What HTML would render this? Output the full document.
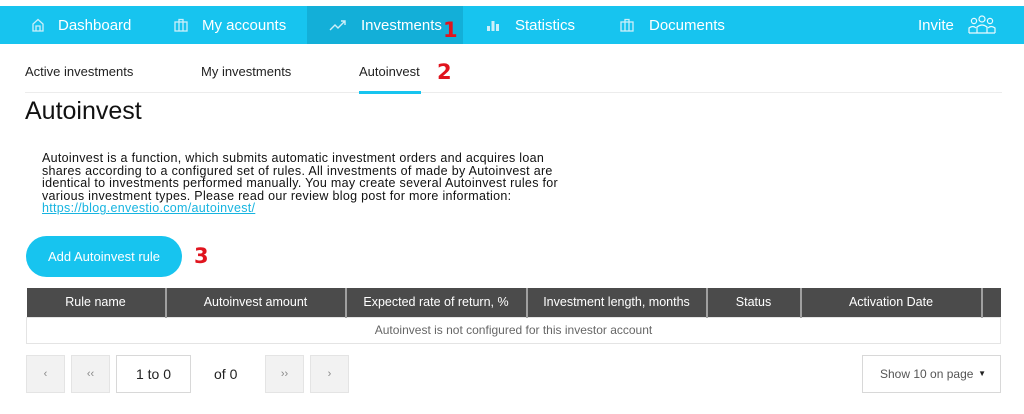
<!DOCTYPE html>
<html><head><style>
*{margin:0;padding:0;box-sizing:border-box}
body{width:1024px;height:414px;background:#fff;font-family:"Liberation Sans",sans-serif;position:relative;overflow:hidden;color:#222}
.a{position:absolute;white-space:nowrap}
.nav{position:absolute;left:0;top:6px;width:1024px;height:38px;background:#17c4ef}
.nav .a{color:#fff;font-size:15px;top:11px}
.red{color:#e0141e;font-weight:bold;font-size:21px;font-family:"DejaVu Sans",sans-serif}
th{background:#4b4b4b;color:#fff;font-weight:normal;font-size:12.5px;height:29px;border-right:2px solid #a0a0a0}
td{font-size:12px;color:#666;text-align:center;height:26px;border:1px solid #e4e4e4}
.pb{position:absolute;top:355px;height:38px;background:#f2f2f2;border:1px solid #e4e4e4;color:#888;font-size:11px;text-align:center;line-height:36px}
</style></head><body>
<div class="nav">
<div style="position:absolute;left:307px;top:0;width:156px;height:38px;background:#13afd8"></div>
<svg class="a" style="left:31px;top:12px" width="14" height="14" viewBox="0 0 14 14" fill="none" stroke="#cdeff9" stroke-width="1.3"><path d="M2 13V6L7 1.5 12 6v7zM5 13V8h4v5"/></svg>
<div class="a" style="left:58px">Dashboard</div>
<svg class="a" style="left:174px;top:12px" width="14" height="14" viewBox="0 0 14 14" fill="none" stroke="#cdeff9" stroke-width="1.3"><rect x="1" y="4" width="12" height="9"/><path d="M5 4V1.5h4V4M5 4v9M9 4v9"/></svg>
<div class="a" style="left:202px">My accounts</div>
<svg class="a" style="left:329px;top:13px" width="18" height="12" viewBox="0 0 18 12" fill="none" stroke="#cdeff9" stroke-width="1.4"><path d="M1 11l5-5 3 3 7-7M12 2h4v4"/></svg>
<div class="a" style="left:361px">Investments</div>
<svg class="a" style="left:486px;top:12px" width="14" height="14" viewBox="0 0 14 14" fill="#cdeff9"><rect x="1" y="8" width="3" height="5"/><rect x="5.5" y="3" width="3" height="10"/><rect x="10" y="6" width="3" height="7"/></svg>
<div class="a" style="left:515px">Statistics</div>
<svg class="a" style="left:620px;top:12px" width="14" height="14" viewBox="0 0 14 14" fill="none" stroke="#cdeff9" stroke-width="1.3"><rect x="1" y="4" width="12" height="9"/><path d="M5 4V1.5h4V4M5 4v9M9 4v9"/></svg>
<div class="a" style="left:649px">Documents</div>
<div class="a" style="left:918px">Invite</div>
<svg class="a" style="left:968px;top:9px" width="28" height="19" viewBox="0 0 28 19" fill="none" stroke="#eafaff" stroke-width="1.2"><circle cx="14" cy="4" r="3"/><circle cx="6" cy="6" r="2.6"/><circle cx="22" cy="6" r="2.6"/><path d="M9 18v-6q5-4 10 0v6zM1 18v-5q4-3 7 0M27 18v-5q-4-3-7 0M1 18h26"/></svg>
</div>
<div class="red a" style="left:443px;top:18px">1</div>
<div class="a" style="left:25px;top:64px;font-size:13px">Active investments</div>
<div class="a" style="left:201px;top:64px;font-size:13px">My investments</div>
<div class="a" style="left:359px;top:64px;font-size:13px">Autoinvest</div>
<div class="red a" style="left:437px;top:60px">2</div>
<div class="a" style="left:25px;top:92px;width:977px;height:1px;background:#ececec"></div>
<div class="a" style="left:359px;top:91px;width:62px;height:3px;background:#17c4ef"></div>
<div class="a" style="left:25px;top:97px;font-size:25px;color:#111">Autoinvest</div>
<div class="a" style="left:42px;top:152px;font-size:12.5px;line-height:12.6px;letter-spacing:0.3px;color:#111">Autoinvest is a function, which submits automatic investment orders and acquires loan<br>shares according to a configured set of rules. All investments of made by Autoinvest are<br>identical to investments performed manually. You may create several Autoinvest rules for<br>various investment types. Please read our review blog post for more information:<br><span style="color:#17b4e0;text-decoration:underline">https://blog.envestio.com/autoinvest/</span></div>
<div class="a" style="left:26px;top:236px;width:156px;height:41px;border-radius:21px;background:#17c4ef;color:#fff;font-size:13px;text-align:center;line-height:41px">Add Autoinvest rule</div>
<div class="red a" style="left:194px;top:244px">3</div>
<table class="a" style="left:26px;top:288px;width:975px;border-collapse:collapse">
<tr><th style="width:139px">Rule name</th><th style="width:180px">Autoinvest amount</th><th style="width:181px">Expected rate of return, %</th><th style="width:180px">Investment length, months</th><th style="width:94px">Status</th><th style="width:181px">Activation Date</th><th style="border:none"></th></tr>
<tr><td colspan="7">Autoinvest is not configured for this investor account</td></tr>
</table>
<div class="pb" style="left:26px;width:39px">&lsaquo;</div>
<div class="pb" style="left:71px;width:39px">&lsaquo;&lsaquo;</div>
<div class="pb" style="left:116px;width:75px;background:#fff;border-color:#d8d8d8;color:#222;font-size:14px">1 to 0</div>
<div class="a" style="left:214px;top:366px;font-size:14px">of 0</div>
<div class="pb" style="left:265px;width:39px">&rsaquo;&rsaquo;</div>
<div class="pb" style="left:310px;width:39px">&rsaquo;</div>
<div class="pb" style="left:862px;width:139px;background:#fff;border-color:#d8d8d8;color:#555;font-size:12px;text-align:left;padding-left:17px">Show 10 on page <span style="position:absolute;right:14px;font-size:8px;color:#222">&#9660;</span></div>
</body></html>
